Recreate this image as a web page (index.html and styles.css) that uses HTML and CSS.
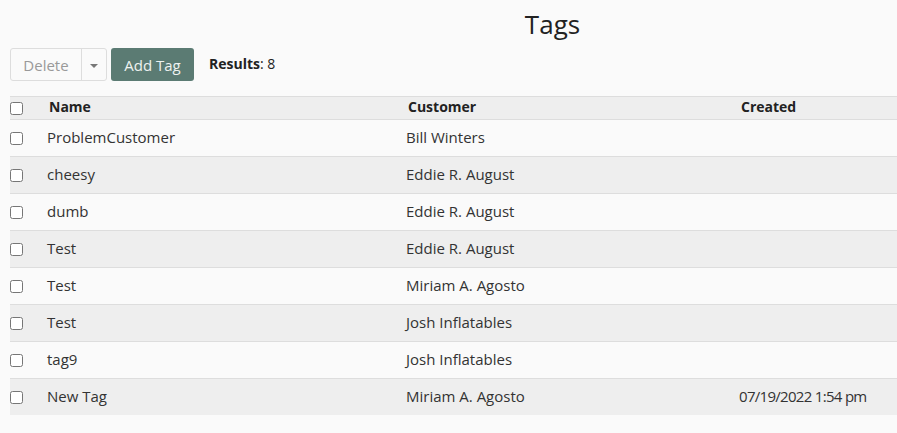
FILE: index.html
```html
<!DOCTYPE html>
<html>
<head>
<meta charset="utf-8">
<link rel="stylesheet" href="styles.css">
</head>
<body>
<div class="page">
  <h1 class="title">Tags</h1>
  <div class="toolbar">
    <div class="split">
      <button class="split-main">Delete</button>
      <button class="split-caret"><span class="caret"></span></button>
    </div>
    <button class="btn-primary">Add Tag</button>
    <div class="results"><b>Results</b>: 8</div>
  </div>
  <table class="grid">
    <colgroup>
      <col class="c-check"><col class="c-name"><col class="c-cust"><col class="c-created">
    </colgroup>
    <thead>
      <tr><th><input type="checkbox"></th><th>Name</th><th>Customer</th><th>Created</th></tr>
    </thead>
    <tbody>
      <tr><td><input type="checkbox"></td><td>ProblemCustomer</td><td>Bill Winters</td><td></td></tr>
      <tr><td><input type="checkbox"></td><td>cheesy</td><td>Eddie R. August</td><td></td></tr>
      <tr><td><input type="checkbox"></td><td>dumb</td><td>Eddie R. August</td><td></td></tr>
      <tr><td><input type="checkbox"></td><td>Test</td><td>Eddie R. August</td><td></td></tr>
      <tr><td><input type="checkbox"></td><td>Test</td><td>Miriam A. Agosto</td><td></td></tr>
      <tr><td><input type="checkbox"></td><td>Test</td><td>Josh Inflatables</td><td></td></tr>
      <tr><td><input type="checkbox"></td><td>tag9</td><td>Josh Inflatables</td><td></td></tr>
      <tr><td><input type="checkbox"></td><td>New Tag</td><td>Miriam A. Agosto</td><td class="date">07/19/2022 1:54 pm</td></tr>
    </tbody>
  </table>
</div>
</body>
</html>
```

FILE: styles.css
```css
html, body {
  margin: 0;
  padding: 0;
  background: #fafafa;
}
body {
  font-family: "Open Sans", "DejaVu Sans", sans-serif;
  font-size: 15px;
  color: #333;
}
.page {
  padding-left: 10px;
}
.title {
  margin: 0;
  padding: 8px 0 0 198px;
  height: 40px;
  box-sizing: border-box;
  text-align: center;
  font-size: 26px;
  font-weight: 400;
  line-height: 32px;
  color: #222;
}
.toolbar {
  display: flex;
  align-items: center;
  margin-top: 8px;
  height: 33px;
}
.split {
  display: flex;
  height: 33px;
  border: 1px solid #dddddd;
  border-radius: 3px;
  box-sizing: border-box;
  background: #fafafa;
}
.split button {
  font-family: inherit;
  background: transparent;
  border: none;
  margin: 0;
  padding: 0;
  color: #999;
  font-size: 15px;
}
.split-main {
  box-sizing: border-box;
  width: 71px;
  border-right: 1px solid #dddddd !important;
}
.split-caret {
  width: 24px;
  display: flex;
  align-items: center;
  justify-content: center;
}
.caret {
  display: block;
  width: 0;
  height: 0;
  border-left: 4px solid transparent;
  border-right: 4px solid transparent;
  border-top: 4px solid #777;
  margin-top: 2px;
}
.btn-primary {
  margin-left: 4px;
  width: 83px;
  height: 33px;
  border: none;
  border-radius: 3px;
  background: #5b7b73;
  color: #eef2f0;
  font-family: inherit;
  font-size: 15px;
  padding: 0;
}
.results {
  margin-left: 15px;
  font-size: 14px;
  color: #222;
  padding-bottom: 2px;
}
.results b {
  font-weight: 700;
}
.grid {
  margin-top: 15px;
  width: 100%;
  border-collapse: collapse;
  table-layout: fixed;
}
.c-check { width: 27px; }
.c-name { width: 359px; }
.c-cust { width: 333px; }
.grid th {
  background: #eeeeee;
  border-top: 1px solid #dddddd;
  border-bottom: 1px solid #dddddd;
  height: 20px;
  padding: 0 0 2px 12px;
  text-align: left;
  font-weight: 700;
  color: #222;
  font-size: 14px;
  line-height: 18px;
}
.grid td {
  height: 33px;
  padding: 0 0 3px 10px;
  border-bottom: 1px solid #dddddd;
  color: #333;
  font-size: 15px;
  line-height: 20px;
}
.grid td.date {
  letter-spacing: -0.7px;
}
.grid th:first-child, .grid td:first-child {
  padding: 0;
}
.grid tbody tr:nth-child(even) td {
  background: #eeeeee;
}
.grid tbody tr:last-child td {
  border-bottom: none;
}
.grid input[type=checkbox] {
  margin: 0;
  width: 13px;
  height: 13px;
  display: block;
}
```
